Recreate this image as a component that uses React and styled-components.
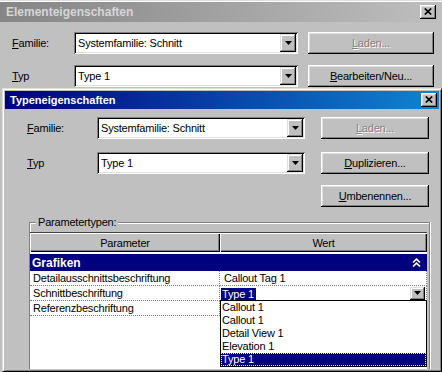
import React from "react";
import styled, { createGlobalStyle } from "styled-components";

const GlobalStyle = createGlobalStyle`
  html, body { margin: 0; padding: 0; background: #c0c0c0; overflow: hidden; }
  body {
    font-family: "Liberation Sans", Arial, sans-serif;
    font-size: 11px;
    letter-spacing: -0.2px;
    color: #000;
  }
`;

const Screen = styled.div`
  width: 442px;
  height: 372px;
  overflow: hidden;
  box-sizing: border-box;
  background: #c0c0c0;
  border-top: 1px solid #dfdfdf;
  box-shadow: inset 0 1px #fff;
  padding-top: 1px;
  display: flex;
  flex-direction: column;
`;

const TitleBar = styled.div`
  flex: none;
  height: ${(p) => p.$h}px;
  margin-right: ${(p) => p.$mr}px;
  background: ${(p) =>
    p.$active
      ? "linear-gradient(90deg, #000080, #1084d0)"
      : "linear-gradient(90deg, #858585, #bebebe)"};
  color: ${(p) => (p.$active ? "#fff" : "#d6d6d6")};
  font-weight: bold;
  font-size: ${(p) => p.$fs}px;
  letter-spacing: 0;
  display: flex;
  align-items: center;
  justify-content: space-between;
  padding: 0 2px 0 ${(p) => p.$pl}px;
`;

const CloseBox = styled.div`
  width: 16px;
  height: 14px;
  box-sizing: border-box;
  background: #c0c0c0;
  box-shadow: inset -1px -1px #000, inset 1px 1px #fff, inset -2px -2px #808080,
    inset 2px 2px #dfdfdf;
  display: flex;
  align-items: center;
  justify-content: center;
  padding: 0 1px 1px 0;
`;

const Form = styled.div`
  flex: none;
  display: flex;
  flex-direction: column;
  padding: ${(p) => p.$pt}px 0 0 ${(p) => p.$pl}px;
`;

const FieldRow = styled.div`
  display: grid;
  grid-template-columns: ${(p) => `${p.$label}px ${p.$combo}px ${p.$btn}px`};
  column-gap: ${(p) => p.$gap}px;
  align-items: center;
  height: 22px;
  margin-top: ${(p) => p.$mt || 0}px;
`;

const Label = styled.span`
  white-space: nowrap;
`;

const Combo = styled.div`
  height: 22px;
  box-sizing: border-box;
  background: #fff;
  box-shadow: inset 1px 1px #808080, inset -1px -1px #fff, inset 2px 2px #000,
    inset -2px -2px #dfdfdf;
  display: flex;
  align-items: center;
  padding: 2px;
`;

const ComboText = styled.span`
  flex: 1;
  padding-left: 2px;
  white-space: nowrap;
  overflow: hidden;
`;

const ArrowBtn = styled.div`
  width: ${(p) => p.$w}px;
  height: ${(p) => p.$h}px;
  box-sizing: border-box;
  background: #c0c0c0;
  box-shadow: inset -1px -1px #000, inset 1px 1px #dfdfdf, inset -2px -2px #808080,
    inset 2px 2px #fff;
  display: flex;
  align-items: center;
  justify-content: center;
  flex: none;
`;

const Button = styled.div`
  grid-column: 3;
  height: 22px;
  box-sizing: border-box;
  background: #c0c0c0;
  box-shadow: inset -1px -1px #000, inset 1px 1px #fff, inset -2px -2px #808080,
    inset 2px 2px #dfdfdf;
  display: flex;
  align-items: center;
  justify-content: center;
  white-space: nowrap;
  color: ${(p) => (p.$disabled ? "#808080" : "#000")};
  text-shadow: ${(p) => (p.$disabled ? "1px 1px #fff" : "none")};
`;

const InnerWindow = styled.section`
  flex: 1;
  min-height: 0;
  margin: 1px 0 0 2px;
  box-sizing: border-box;
  background: #c0c0c0;
  border: 1px solid;
  border-color: #dfdfdf #000 #000 #dfdfdf;
  box-shadow: inset 1px 1px #fff, inset -1px -1px #808080;
  padding: 2px;
  display: flex;
  flex-direction: column;
`;

const GroupBox = styled.div`
  flex: 1;
  min-height: 0;
  position: relative;
  margin: 15px 9px 0 24px;
  border: 1px solid #808080;
  border-bottom: 0;
  box-shadow: inset 1px 1px #fff, 1px 0 #fff;
  padding: 9px 2px 0 0;
  display: flex;
  flex-direction: column;
`;

const Legend = styled.span`
  position: absolute;
  top: -8px;
  left: 6px;
  padding: 0 2px;
  line-height: 14px;
  background: #c0c0c0;
`;

const Grid = styled.div`
  flex: 1;
  min-height: 0;
  background: #fff;
  border-top: 1px solid #404040;
  display: flex;
  flex-direction: column;
`;

const HeaderRow = styled.div`
  display: grid;
  grid-template-columns: 190px 1fr;
  height: 19px;
  margin-bottom: 2px;
`;

const HeaderCell = styled.div`
  background: #c0c0c0;
  box-shadow: inset 1px 1px #fff, inset -1px -1px #000, inset -2px -2px #808080;
  display: flex;
  align-items: center;
  justify-content: center;
`;

const CategoryRow = styled.div`
  height: 17px;
  background: #000080;
  color: #fff;
  font-weight: bold;
  font-size: 12px;
  letter-spacing: 0;
  display: flex;
  align-items: center;
  justify-content: space-between;
  padding: 0 6px 0 2px;
`;

const DataRow = styled.div`
  display: grid;
  grid-template-columns: 190px 1fr;
  height: 15px;
`;

const Cell = styled.div`
  position: relative;
  box-sizing: border-box;
  border-bottom: 1px dotted #808080;
  border-right: 1px dotted #808080;
  display: flex;
  align-items: center;
  padding-left: ${(p) => p.$pl}px;
  white-space: nowrap;
  line-height: 14px;
`;

const Highlight = styled.span`
  background: #000080;
  color: #fff;
  padding: 0 2px 0 1px;
  line-height: 12px;
  margin-top: 1px;
`;

const CellArrow = styled(ArrowBtn)`
  margin-left: auto;
  margin-right: 1px;
`;

const DropList = styled.ul`
  position: absolute;
  top: 100%;
  left: 0;
  width: 205px;
  margin: 0;
  padding: 0;
  list-style: none;
  background: #fff;
  border: 1px solid #000;
  z-index: 2;
`;

const DropItem = styled.li`
  height: 13px;
  line-height: 13px;
  padding-left: 1px;
  white-space: nowrap;
  background: ${(p) => (p.$selected ? "#000080" : "transparent")};
  color: ${(p) => (p.$selected ? "#fff" : "#000")};
  outline: ${(p) => (p.$selected ? "1px dotted #ffff80" : "none")};
  outline-offset: -1px;
`;

const XGlyph = () => (
  <svg width="8" height="7" viewBox="0 0 8 7">
    <path d="M0.8 0.5 L7.2 6.5 M7.2 0.5 L0.8 6.5" stroke="#000" strokeWidth="1.7" fill="none" />
  </svg>
);

const DownGlyph = () => (
  <svg width="7" height="4" viewBox="0 0 7 4">
    <polygon points="0,0 7,0 3.5,4" fill="#000" />
  </svg>
);

const DoubleUp = () => (
  <svg width="9" height="9" viewBox="0 0 9 9">
    <path d="M1 4.5 L4.5 1.2 L8 4.5 M1 8.5 L4.5 5.2 L8 8.5" fill="none" stroke="#fff" strokeWidth="1.6" />
  </svg>
);

const ComboBox = ({ value }) => (
  <Combo>
    <ComboText>{value}</ComboText>
    <ArrowBtn $w={16} $h={18}>
      <DownGlyph />
    </ArrowBtn>
  </Combo>
);

export default function App() {
  const outer = { $label: 52, $combo: 224, $btn: 126, $gap: 10 };
  const inner = { $label: 54, $combo: 208, $btn: 108, $gap: 16 };
  return (
    <>
      <GlobalStyle />
      <Screen>
        <TitleBar $h={20} $mr={4} $pl={6} $fs={12}>
          <span>Elementeigenschaften</span>
          <CloseBox>
            <XGlyph />
          </CloseBox>
        </TitleBar>
        <Form $pt={10} $pl={12}>
          <FieldRow {...outer}>
            <Label>
              <u>F</u>amilie:
            </Label>
            <ComboBox value="Systemfamilie: Schnitt" />
            <Button $disabled>
              <u>L</u>aden...
            </Button>
          </FieldRow>
          <FieldRow {...outer} $mt={11}>
            <Label>
              <u>T</u>yp
            </Label>
            <ComboBox value="Type 1" />
            <Button>
              <u>B</u>earbeiten/Neu...
            </Button>
          </FieldRow>
        </Form>
        <InnerWindow>
          <TitleBar $active $h={18} $mr={0} $pl={5} $fs={11}>
            <span>Typeneigenschaften</span>
            <CloseBox>
              <XGlyph />
            </CloseBox>
          </TitleBar>
          <Form $pt={8} $pl={22}>
            <FieldRow {...inner}>
              <Label>
                <u>F</u>amilie:
              </Label>
              <ComboBox value="Systemfamilie: Schnitt" />
              <Button $disabled>
                <u>L</u>aden...
              </Button>
            </FieldRow>
            <FieldRow {...inner} $mt={13}>
              <Label>
                <u>T</u>yp
              </Label>
              <ComboBox value="Type 1" />
              <Button>
                <u>D</u>uplizieren...
              </Button>
            </FieldRow>
            <FieldRow {...inner} $mt={11}>
              <Button>
                <u>U</u>mbenennen...
              </Button>
            </FieldRow>
          </Form>
          <GroupBox>
            <Legend>Parametertypen:</Legend>
            <Grid>
              <HeaderRow>
                <HeaderCell>Parameter</HeaderCell>
                <HeaderCell>Wert</HeaderCell>
              </HeaderRow>
              <CategoryRow>
                <span>Grafiken</span>
                <DoubleUp />
              </CategoryRow>
              <DataRow>
                <Cell $pl={3}>Detailausschnittsbeschriftung</Cell>
                <Cell $pl={4}>Callout Tag 1</Cell>
              </DataRow>
              <DataRow>
                <Cell $pl={3}>Schnittbeschriftung</Cell>
                <Cell $pl={1}>
                  <Highlight>Type 1</Highlight>
                  <CellArrow $w={15} $h={13}>
                    <DownGlyph />
                  </CellArrow>
                  <DropList>
                    <DropItem>Callout 1</DropItem>
                    <DropItem>Callout 1</DropItem>
                    <DropItem>Detail View 1</DropItem>
                    <DropItem>Elevation 1</DropItem>
                    <DropItem $selected>Type 1</DropItem>
                  </DropList>
                </Cell>
              </DataRow>
              <DataRow>
                <Cell $pl={3}>Referenzbeschriftung</Cell>
                <Cell $pl={4} />
              </DataRow>
            </Grid>
          </GroupBox>
        </InnerWindow>
      </Screen>
    </>
  );
}
